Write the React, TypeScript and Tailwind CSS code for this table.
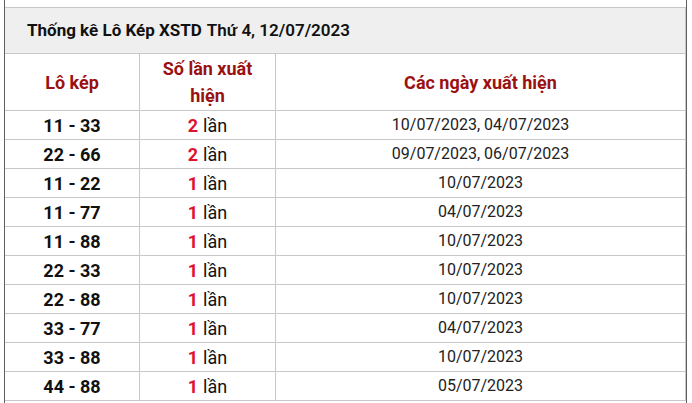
import React from "react";

const rows: [string, number, string][] = [
  ["11 - 33", 2, "10/07/2023, 04/07/2023"],
  ["22 - 66", 2, "09/07/2023, 06/07/2023"],
  ["11 - 22", 1, "10/07/2023"],
  ["11 - 77", 1, "04/07/2023"],
  ["11 - 88", 1, "10/07/2023"],
  ["22 - 33", 1, "10/07/2023"],
  ["22 - 88", 1, "10/07/2023"],
  ["33 - 77", 1, "04/07/2023"],
  ["33 - 88", 1, "10/07/2023"],
  ["44 - 88", 1, "05/07/2023"],
];

export default function App() {
  return (
    <div
      className="w-[692px] h-[403px] bg-white overflow-hidden pl-[4px]"
      style={{ fontFamily: "Roboto, 'Noto Sans', sans-serif" }}
    >
      <div className="w-[683px] h-full border-l border-r border-[#5f5f5f] pt-[7px]">
        <div className="border-t border-r border-[#c8c8c8]">
          <div className="h-[46px] bg-[#efefef] border-b border-[#c8c8c8] flex items-center pl-[22px] text-[17px] text-[#111]">
            <span className="font-bold">Thống kê Lô Kép XSTD</span>
            <span className="font-semibold ml-[5px]">Thứ 4, 12/07/2023</span>
          </div>
          <div className="grid grid-cols-[135px_136px_1fr]">
            <div className="h-[57px] border-r border-b border-[#c8c8c8] flex items-center justify-center text-[18px] font-bold text-[#9a1111]">
              Lô kép
            </div>
            <div className="h-[57px] border-r border-b border-[#c8c8c8] flex items-center justify-center text-center text-[18px] leading-[27px] font-bold text-[#9a1111] px-[14px]">
              Số lần xuất hiện
            </div>
            <div className="h-[57px] border-b border-[#c8c8c8] flex items-center justify-center text-[18px] font-bold text-[#9a1111]">
              Các ngày xuất hiện
            </div>
            {rows.map(([pair, n, dates], i) => (
              <React.Fragment key={i}>
                <div className="h-[29px] border-r border-b border-[#c8c8c8] flex items-center justify-center text-[18px] font-bold text-[#111]">
                  {pair}
                </div>
                <div className="h-[29px] border-r border-b border-[#c8c8c8] flex items-center justify-center text-[18px] text-[#111]">
                  <span className="font-bold text-[#e0102f]">{n}</span>
                  <span className="ml-[5px]">lần</span>
                </div>
                <div className="h-[29px] border-b border-[#c8c8c8] flex items-center justify-center text-[16px] text-[#222]">
                  {dates}
                </div>
              </React.Fragment>
            ))}
          </div>
        </div>
      </div>
    </div>
  );
}
